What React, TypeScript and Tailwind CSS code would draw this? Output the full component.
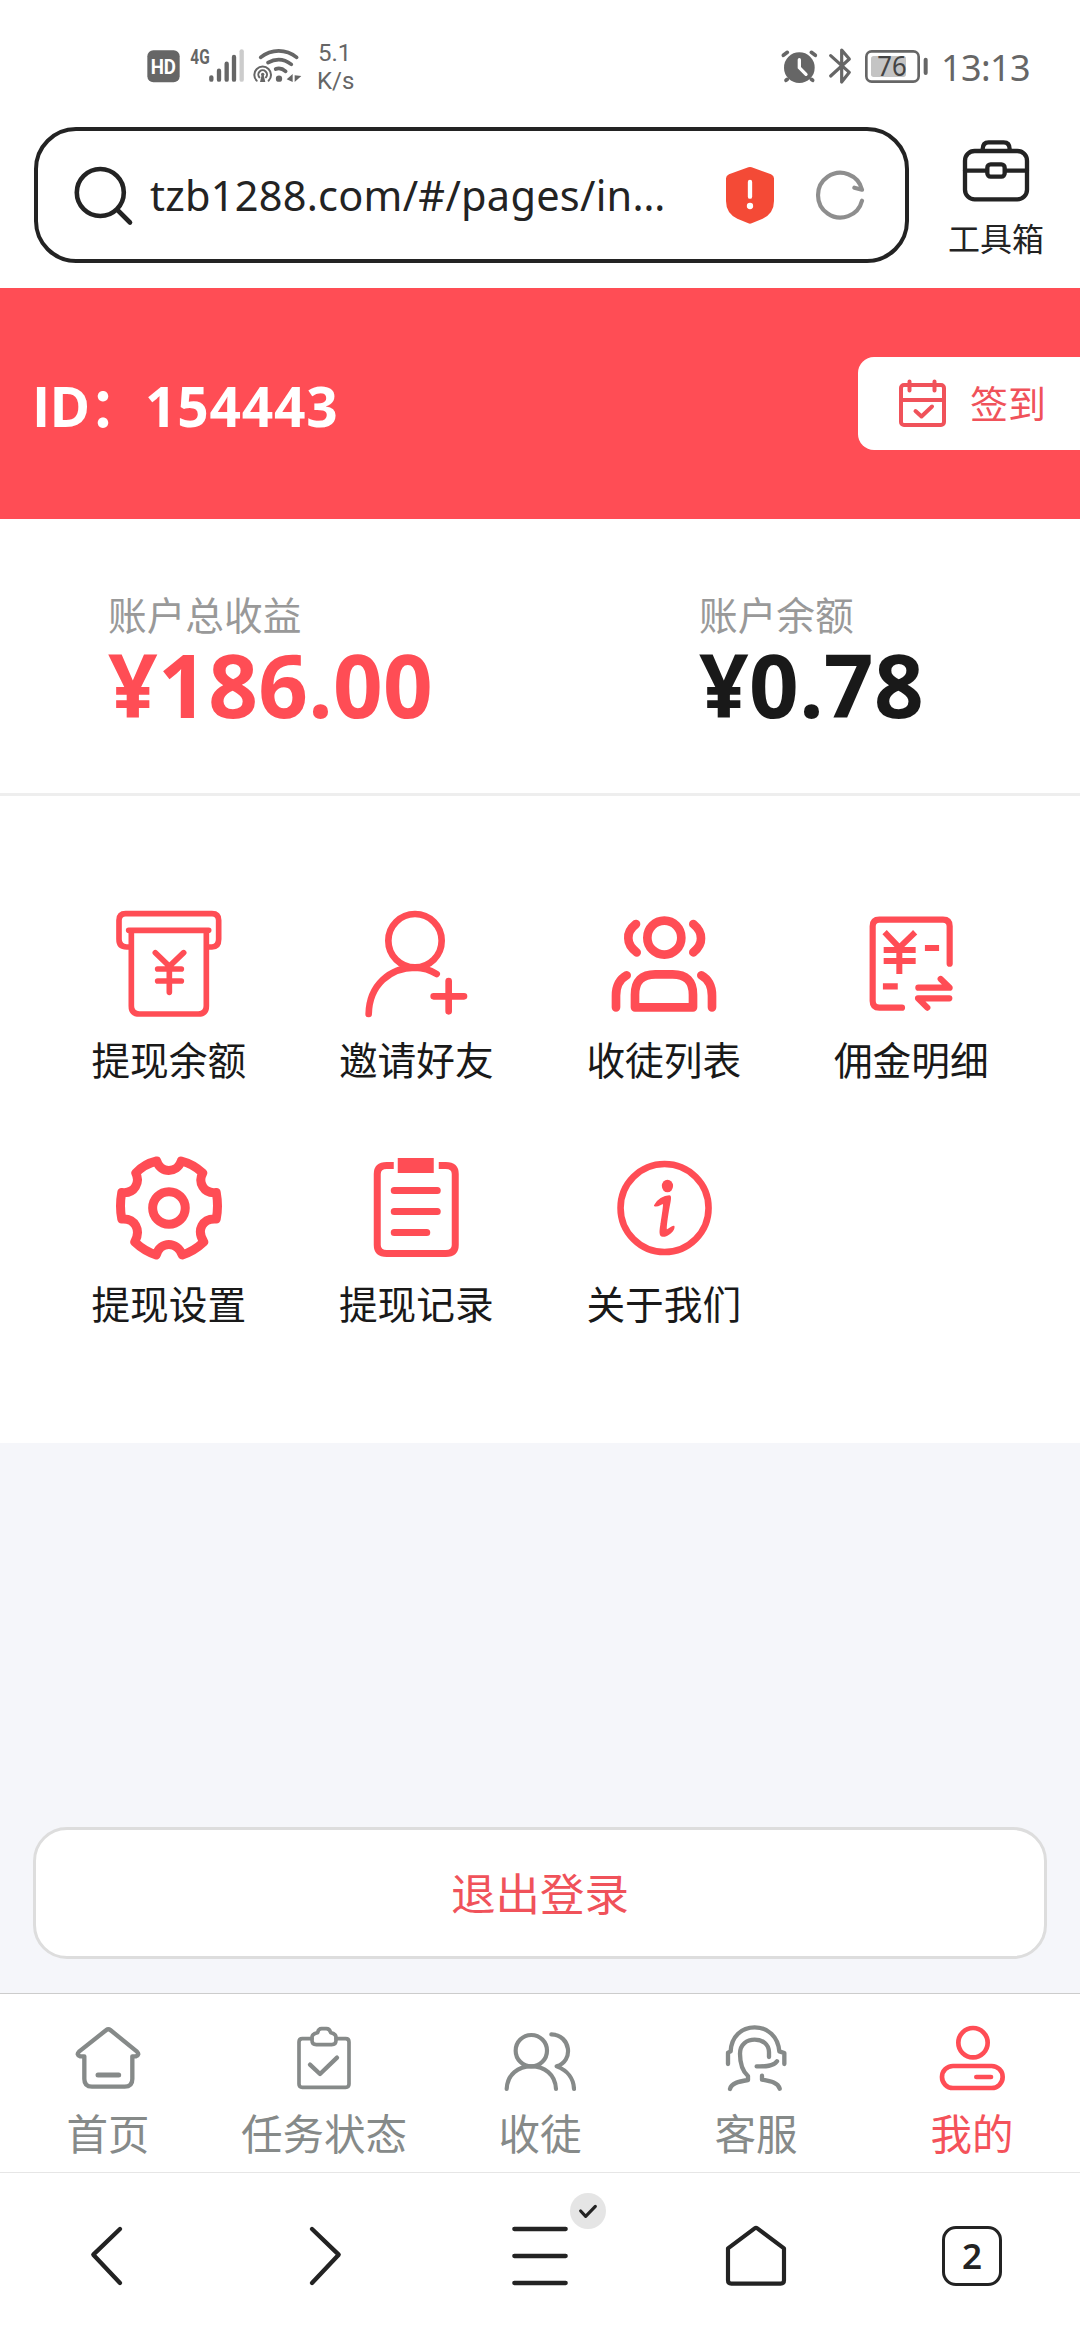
import type { ReactNode } from 'react';

const RED = '#ff4d55';
const GRAY = '#868a89';
const INK = '#232323';

type IconProps = {
  box: string;
  color: string;
  width: number;
  className?: string;
  children: ReactNode;
};

function Icon({ box, color, width, className = 'size-[72px]', children }: IconProps) {
  return (
    <svg
      className={`block shrink-0 ${className}`}
      viewBox={box}
      fill="none"
      stroke={color}
      strokeWidth={width}
      strokeLinecap="round"
      strokeLinejoin="round"
    >
      {children}
    </svg>
  );
}

function StatusBar() {
  return (
    <div className="flex h-[110px] items-start justify-between pl-[144px] pr-[50px] text-[#666]">
      <div className="flex items-start">
        <svg className="mt-[44px] block h-[44px] w-[160px]" viewBox="72 72 480 132" fill="none" stroke="#666" strokeLinecap="round">
          <rect x="82" y="91" width="97" height="96" rx="18" fill="#666" stroke="none" />
          <text x="92" y="162" fontSize="62" fontWeight="700" fill="#fff" stroke="none" textLength="76" lengthAdjust="spacingAndGlyphs" fontFamily="Roboto, sans-serif">HD</text>
          <text x="211" y="131" fontSize="58" fontWeight="700" fill="#666" stroke="none" textLength="58" lengthAdjust="spacingAndGlyphs" fontFamily="Roboto, sans-serif">4G</text>
          <g strokeWidth="13">
            <path d="M274 172v7M297 152v27M320 131v48M342 111v68" />
            <path d="M365 94v85" stroke="#ccc" />
          </g>
          <g strokeWidth="11">
            <path d="M422 112c32-26 76-26 108 0" />
            <path d="M444 128c24-14 48-12 70 5M467 147c10-4 20-2 30 7" />
          </g>
          <circle cx="477" cy="176" r="9.5" fill="#666" stroke="none" />
          <g strokeWidth="6">
            <path d="M410 182a25 25 0 1 1 36 0M418 172a13 13 0 1 1 20 0" />
          </g>
          <circle cx="428" cy="163" r="5" fill="#666" stroke="none" />
          <path d="M425 165h6l5 21h-16z" fill="#666" stroke="none" />
          <path d="M500 178l18-16v24zM524 186v-20l20 2z" fill="#666" stroke="none" />
        </svg>
        <div className="ml-[13px] mt-[39px] font-['Roboto'] text-[24px] leading-[28px]">
          <div className="pl-px">5.1</div>
          <div>K/s</div>
        </div>
      </div>
      <div className="flex items-start">
        <svg className="mt-[44px] block h-[44px] w-[152px]" viewBox="54 72 456 132" fill="none" stroke="#666" strokeLinecap="round" strokeLinejoin="round">
          <circle cx="112" cy="143" r="46" fill="#666" stroke="none" />
          <path d="M64 106l12-9M160 106l-12-9" strokeWidth="11" />
          <path d="M76 178l-4 3M148 178l4 3" strokeWidth="11" />
          <path d="M112 119v24l20 20" stroke="#fff" strokeWidth="10" />
          <path d="M206 107l56 50-23 29V90l23 27-56 51" strokeWidth="9.5" />
          <rect x="313" y="94" width="157" height="91" rx="16" strokeWidth="8" />
          <rect x="327" y="108" width="105" height="63" rx="8" fill="#c4c4c4" stroke="none" />
          <path d="M491 119v40" strokeWidth="12" />
          <text x="346" y="169" fontSize="80" fill="#444" stroke="none" textLength="88" lengthAdjust="spacingAndGlyphs" fontFamily="Noto Sans, sans-serif">76</text>
        </svg>
        <div className="ml-[9px] mt-[44px] font-['Noto_Sans'] text-[36px] leading-[48px] tracking-[-0.6px]">13:13</div>
      </div>
    </div>
  );
}

function AddressBar() {
  return (
    <div className="flex h-[178px] items-start pl-[34px] pt-[17px]">
      <div className="flex h-[136px] w-[875px] items-center rounded-[42px] border-[4px] border-[#232323] pl-[32px] pr-[40px]">
        <Icon box="70 164 66 66" color={INK} width={4.6} className="mt-[2px] size-[66px]">
          <circle cx="100.3" cy="193.5" r="23.5" />
          <path d="M117.5 211l12.500 12.500" />
        </Icon>
        <div className="ml-[14px] w-[540px] whitespace-nowrap font-['Noto_Sans'] text-[41.500px] leading-[60px] tracking-[0.25px] text-[#232323]">
          tzb1288.com/#/pages/in…
        </div>
        <Icon box="138 168 144 174" color="#fff" width={13} className="ml-[36px] h-[58px] w-[48px]">
          <path d="M205 172q5-2 10 0l58 21q9 4 9 12v68q0 37-34 53l-33 14q-5 2-10 0l-33-14q-34-16-34-53v-68q0-8 9-12z" fill="#f44a36" stroke="none" />
          <path d="M210 216v44" />
          <circle cx="210" cy="288" r="9.500" fill="#fff" stroke="none" />
        </Icon>
        <Icon box="405 180 150 150" color="#8e8e8e" width={12.500} className="ml-[41px] size-[50px]">
          <path d="M546 272a67 67 0 1 1 0-33l-23-6" />
        </Icon>
      </div>
      <div className="ml-[39px] mt-[10px] flex w-[96px] flex-col items-center">
        <Icon box="840 80 216 204" color={INK} width={13} className="h-[68px] w-[72px]">
          <rect x="855" y="122" width="186" height="145" rx="29" />
          <path d="M908 117q0-21 18-21h45q18 0 18 21M855 181h62M979 181h62" />
          <rect x="922" y="162" width="52" height="37" rx="10" />
        </Icon>
        <div className="mt-[8px] whitespace-nowrap text-[32px] leading-[48px] text-[#232323]">工具箱</div>
      </div>
    </div>
  );
}

function ProfileHeader() {
  return (
    <div className="flex h-[231px] items-start justify-between bg-[#ff4d55] pt-[69px]">
      <div className="flex pl-[32px] pt-[17px] font-['Open_Sans','Noto_Sans_CJK_SC'] text-[55px] font-bold leading-[64px] text-white">
        <span className="w-[113px] whitespace-nowrap tracking-[-0.8px]">ID：</span>
        <span className="tracking-[0.8px]">154443</span>
      </div>
      <div className="flex h-[93px] w-[222px] items-center rounded-l-[16px] bg-white pl-[39px] text-[#f0525a]">
        <Icon box="897 378 50 51" color="#f0525a" width={4} className="h-[51px] w-[50px]">
          <rect x="901" y="385" width="43" height="40" rx="3" />
          <path d="M901 400h43M909.500 381.500v9M934.500 381.500v9M915.500 411l6 5.500 10.500-10" />
        </Icon>
        <div className="ml-[23px] mt-[-3px] text-[38px] leading-[56px]">签到</div>
      </div>
    </div>
  );
}

function Balance({ label, amount, tone }: { label: string; amount: string; tone: string }) {
  return (
    <div>
      <div className="text-[38.700px] leading-[40px] text-[#999]">{label}</div>
      <div className={`font-['Noto_Sans'] text-[87px] font-bold leading-[103px] tracking-[0.3px] ${tone}`}>{amount}</div>
    </div>
  );
}

const actions: { label: string; icon: ReactNode }[] = [
  {
    label: '提现余额',
    icon: (
      <Icon box="105 60 324 324" color={RED} width={17} className="size-[108px]">
        <path d="M150 171h-10q-23 0-23-23V91q0-20 20-20h259q20 0 20 20v57q0 23-20 23h-11" />
        <path d="M146 121h240M154 121v227q0 24 24 24h177q24 0 24-24V121" />
        <path d="M226 188l42 41 43-41M233 237h71M233 273h71M268 230v77" />
      </Icon>
    ),
  },
  {
    label: '邀请好友',
    icon: (
      <Icon box="846 60 324 324" color={RED} width={20} className="size-[108px]">
        <circle cx="1005" cy="152" r="80" />
        <path d="M866 372C868 285 930 233 1005 233q37 1 65 19M1061 319h91M1106 273v91" />
      </Icon>
    ),
  },
  {
    label: '收徒列表',
    icon: (
      <Icon box="150 60 324 324" color={RED} width={26} className="size-[108px]">
        <circle cx="313" cy="143" r="51" />
        <path d="M228 102q-25 20-23 43 0 23 25 42M400 102q24 20 23 43 1 22-23 42" />
        <path d="M225 352v-38q0-61 61-61h52q61 0 61 61v38zM200 256q-32 18-32 61v35M424 256q32 18 32 61v35" />
      </Icon>
    ),
  },
  {
    label: '佣金明细',
    icon: (
      <Icon box="891 60 324 324" color={RED} width={18.500} className="size-[108px]">
        <path d="M1169 221V109q0-20-20-20H958q-20 0-20 20v224q0 20 20 20h68" />
        <path d="M1075 293h94l-27-26M1168 325h-94l28 28" />
        <path d="M980 133l38 40 41-40M980 180h78M980 213h78M1018 176v67" strokeLinecap="square" strokeWidth="18" />
        <path d="M1104 174h24M978 289h26" strokeLinecap="square" />
      </Icon>
    ),
  },
  {
    label: '提现设置',
    icon: (
      <Icon box="114.750 1154 108 108" color={RED} width={9} className="size-[108px]">
        <path d="M156.500 1161C160 1173.500 177 1173.500 181 1161Q193 1164 202.500 1173C197.500 1182 203 1194 216 1192.500Q218.500 1206 216 1219C202 1218 196 1230 203.500 1242Q194 1251 182 1255C177 1241 160 1241 156 1255Q144 1251 134.500 1242C141 1230 135 1218 121.500 1219Q119 1206 121.500 1192.500C135 1194 140 1182 135.500 1173Q144 1164 156.500 1161Z" />
        <circle cx="168.700" cy="1208" r="16.300" strokeWidth="9" />
      </Icon>
    ),
  },
  {
    label: '提现记录',
    icon: (
      <Icon box="362.250 1154 108 108" color={RED} width={7} className="size-[108px]">
        <path d="M394 1165.500h-7q-9.500 0-9.500 8.500v71q0 8.500 9.500 8.500h59q9.500 0 9.500-8.500v-71q0-8.500-9.500-8.500h-7" strokeLinecap="butt" />
        <rect x="398" y="1158" width="36" height="15" fill={RED} stroke="none" />
        <path d="M394.500 1190.500h43M394.500 1211.500h43M394.500 1232.500h32.500" />
      </Icon>
    ),
  },
  {
    label: '关于我们',
    icon: (
      <Icon box="609.750 1154 108 108" color={RED} width={6.600} className="size-[108px]">
        <circle cx="664.300" cy="1208" r="44" />
        <ellipse cx="667.200" cy="1186" rx="5.600" ry="6.300" fill={RED} stroke="none" />
        <path d="M654.500 1205.500C657 1200 664 1196 669 1196C671 1196 669.500 1202 668 1210C666.500 1219 665 1228 666 1230C667 1231 672 1226 673.500 1226.500C674 1230 668 1236 662.500 1236C659 1236 660 1230 661 1224C662 1216 664 1206 663.500 1203.500C662 1202 658 1207 654.500 1205.500Z" fill={RED} strokeWidth="1.600" />
      </Icon>
    ),
  },
];

const tabs: { label: string; active?: boolean; icon: ReactNode }[] = [
  {
    label: '首页',
    icon: (
      <Icon box="96 129 216 216" color={GRAY} width={13}>
        <path d="M133 229v68q0 23 23 23h98q23 0 23-23v-68h11q12-5 3-14l-80-65q-6-5-12 0l-82 65q-9 9 3 14z" />
        <path d="M174 285h62" strokeWidth="15" />
      </Icon>
    ),
  },
  {
    label: '任务状态',
    icon: (
      <Icon box="744 129 216 216" color={GRAY} width={11}>
        <path d="M816 176h-29q-10 0-10 10v126q0 10 10 10h130q10 0 10-10V186q0-10-10-10h-29" />
        <path d="M833 158q2-12 12-12h14q10 0 13 12 16 3 16 15v8q0 13-13 13h-46q-13 0-13-13v-8q0-12 17-15z" />
        <path d="M810 254l30 28 51-49" strokeWidth="13" />
      </Icon>
    ),
  },
  {
    label: '收徒',
    icon: (
      <Icon box="-108 129 216 216" color={GRAY} width={12.500}>
        <circle cx="-26" cy="212" r="47" />
        <path d="M-100 327C-98 282-65 259-26 259S46 282 48 327M34 163C93 165 102 243 50 259C83 271 101 297 102 327" />
      </Icon>
    ),
  },
  {
    label: '客服',
    icon: (
      <Icon box="540 129 216 216" color={GRAY} width={13}>
        <path d="M564 252v-34l8-4C574 169 605 142 644 142S714 169 718 214l15 5v33" />
        <path d="M687 231v-14c0-25-20-38-43-38s-44 13-44 42c0 28 6 51 24 67v12c-28 5-50 9-54 27M666 287v12c28 5 48 9 53 27M650 259c28 1 50 0 61-15" />
      </Icon>
    ),
  },
  {
    label: '我的',
    active: true,
    icon: (
      <Icon box="1188 129 216 216" color={RED} width={14}>
        <circle cx="1299" cy="188" r="44" />
        <rect x="1206" y="258" width="182" height="66" rx="33" />
        <path d="M1309 291h44" />
      </Icon>
    ),
  },
];

function BrowserNav() {
  return (
    <div className="grid h-[168px] grid-cols-5 justify-items-center border-t border-[#e6e6e6] pt-[47px]">
      <Icon box="96 720 216 216" color={INK} width={13}>
        <path d="M240 747l-80 77 80 85" />
      </Icon>
      <Icon box="744 720 216 216" color={INK} width={13}>
        <path d="M816 747l80 77-80 85" />
      </Icon>
      <div className="relative">
        <Icon box="-108 720 216 216" color={INK} width={13}>
          <path d="M-77 747H77M-77 828H77M-77 909H77" />
        </Icon>
        <div className="absolute left-[66px] top-[-27px] flex size-[36px] items-center justify-center rounded-full bg-[#e5e5e5]">
          <Icon box="114 666 66 54" color={INK} width={9.500} className="h-[18px] w-[22px]">
            <path d="M125 693l15 16 29-30" />
          </Icon>
        </div>
      </div>
      <Icon box="540 720 216 216" color={INK} width={12.500}>
        <path d="M564 805l80-60q4-3 8 0l80 60v96q0 10-10 10H574q-10 0-10-10z" />
      </Icon>
      <div className="mt-[6px] flex size-[60px] items-center justify-center rounded-[14px] border-[3.500px] border-[#232323] font-['Noto_Sans'] text-[35px] font-semibold text-[#232323]">
        2
      </div>
    </div>
  );
}

export default function App() {
  return (
    <div className="flex h-[2340px] w-[1080px] flex-col overflow-hidden bg-white font-['Noto_Sans_CJK_SC',sans-serif]">
      <StatusBar />
      <AddressBar />
      <ProfileHeader />
      <div className="flex h-[277px] items-start border-b-[3px] border-[#eee] pl-[108px] pt-[74px]">
        <div className="w-[591px]">
          <Balance label="账户总收益" amount="¥186.00" tone="text-[#ff4d55]" />
        </div>
        <Balance label="账户余额" amount="¥0.78" tone="text-[#191919]" />
      </div>
      <div className="grid h-[647px] grid-cols-4 content-start gap-y-[32px] px-[45px] pt-[114px]">
        {actions.map((a) => (
          <div key={a.label} className="flex h-[212px] flex-col items-center">
            {a.icon}
            <div className="mt-[12px] text-[38.700px] leading-[56px] text-[#191919]">{a.label}</div>
          </div>
        ))}
      </div>
      <div className="flex h-[550px] flex-col justify-end bg-[#f5f6fa] px-[33px] pb-[34px]">
        <button className="flex h-[132px] w-full items-center justify-center rounded-[34px] border-[3px] border-[#ddd] bg-white pb-[3px] text-[44.500px] leading-[60px] text-[#f0525a]">
          退出登录
        </button>
      </div>
      <div className="grid h-[179px] grid-cols-5 border-t border-[#ccc] pt-[29px]">
        {tabs.map((t) => (
          <div key={t.label} className="flex flex-col items-center">
            {t.icon}
            <div className={`mt-[9px] text-[41.500px] leading-[56px] ${t.active ? 'text-[#f4525a]' : 'text-[#868a89]'}`}>{t.label}</div>
          </div>
        ))}
      </div>
      <BrowserNav />
    </div>
  );
}
